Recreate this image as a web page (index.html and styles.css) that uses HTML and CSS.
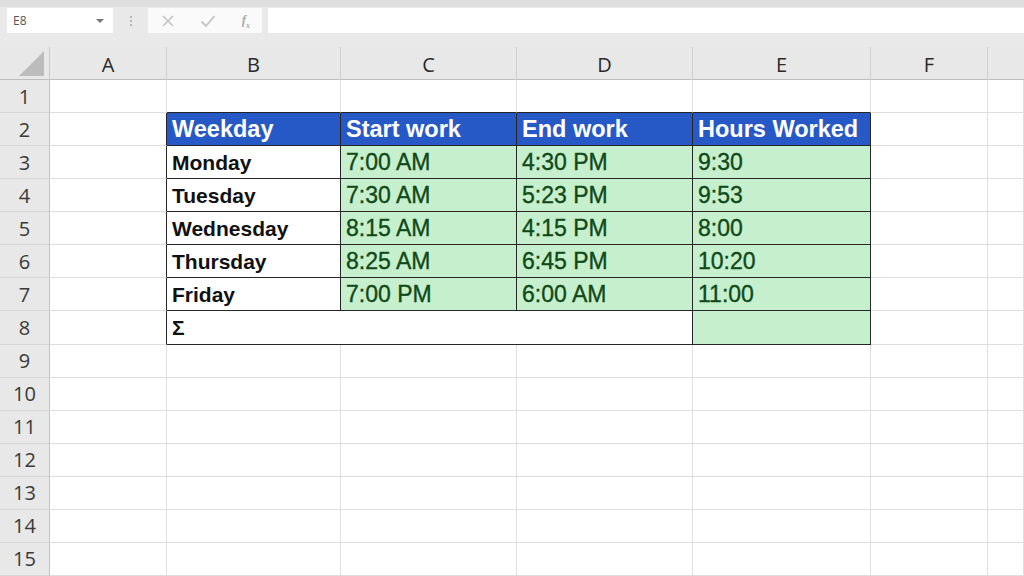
FILE: index.html
```html
<!DOCTYPE html>
<html>
<head>
<meta charset="utf-8">
<link rel="stylesheet" href="styles.css">
</head>
<body>
<div class="app">
  <div class="toolbar">
    <div class="namebox"><span>E8</span><span class="caret"></span></div>
    <div class="dots"><i></i><i></i><i></i></div>
    <div class="fxbox">
      <svg width="14" height="14" viewBox="0 0 14 14"><path d="M2 2 L12 12 M12 2 L2 12" stroke="#c4c4c4" stroke-width="1.6" fill="none"/></svg>
      <svg width="16" height="14" viewBox="0 0 16 14"><path d="M1.5 7.5 L6 12 L14.5 2" stroke="#c4c4c4" stroke-width="1.8" fill="none"/></svg>
      <span class="fx">f<sub>x</sub></span>
    </div>
    <div class="formula"></div>
  </div>
  <div class="sheet">
    <div class="corner"><span class="tri"></span></div>
    <div class="ch">A</div><div class="ch">B</div><div class="ch">C</div><div class="ch">D</div><div class="ch">E</div><div class="ch">F</div><div class="ch last"></div>

    <div class="rh">1</div><div class="c"></div><div class="c tt"></div><div class="c tt"></div><div class="c tt"></div><div class="c tt"></div><div class="c"></div><div class="c"></div>

    <div class="rh">2</div><div class="c tl"></div><div class="c t hd">Weekday</div><div class="c t hd">Start work</div><div class="c t hd">End work</div><div class="c t hd">Hours Worked</div><div class="c"></div><div class="c"></div>

    <div class="rh">3</div><div class="c tl"></div><div class="c t nm">Monday</div><div class="c t g">7:00 AM</div><div class="c t g">4:30 PM</div><div class="c t g">9:30</div><div class="c"></div><div class="c"></div>

    <div class="rh">4</div><div class="c tl"></div><div class="c t nm">Tuesday</div><div class="c t g">7:30 AM</div><div class="c t g">5:23 PM</div><div class="c t g">9:53</div><div class="c"></div><div class="c"></div>

    <div class="rh">5</div><div class="c tl"></div><div class="c t nm">Wednesday</div><div class="c t g">8:15 AM</div><div class="c t g">4:15 PM</div><div class="c t g">8:00</div><div class="c"></div><div class="c"></div>

    <div class="rh">6</div><div class="c tl"></div><div class="c t nm">Thursday</div><div class="c t g">8:25 AM</div><div class="c t g">6:45 PM</div><div class="c t g">10:20</div><div class="c"></div><div class="c"></div>

    <div class="rh">7</div><div class="c tl"></div><div class="c t nm">Friday</div><div class="c t g">7:00 PM</div><div class="c t g">6:00 AM</div><div class="c t g">11:00</div><div class="c"></div><div class="c"></div>

    <div class="rh">8</div><div class="c tl"></div><div class="c t nm span3">Σ</div><div class="c t g"></div><div class="c"></div><div class="c"></div>

    <div class="rh">9</div><div class="c"></div><div class="c"></div><div class="c"></div><div class="c"></div><div class="c"></div><div class="c"></div><div class="c"></div>
    <div class="rh">10</div><div class="c"></div><div class="c"></div><div class="c"></div><div class="c"></div><div class="c"></div><div class="c"></div><div class="c"></div>
    <div class="rh">11</div><div class="c"></div><div class="c"></div><div class="c"></div><div class="c"></div><div class="c"></div><div class="c"></div><div class="c"></div>
    <div class="rh">12</div><div class="c"></div><div class="c"></div><div class="c"></div><div class="c"></div><div class="c"></div><div class="c"></div><div class="c"></div>
    <div class="rh">13</div><div class="c"></div><div class="c"></div><div class="c"></div><div class="c"></div><div class="c"></div><div class="c"></div><div class="c"></div>
    <div class="rh">14</div><div class="c"></div><div class="c"></div><div class="c"></div><div class="c"></div><div class="c"></div><div class="c"></div><div class="c"></div>
    <div class="rh">15</div><div class="c"></div><div class="c"></div><div class="c"></div><div class="c"></div><div class="c"></div><div class="c"></div><div class="c"></div>
  </div>
</div>
</body>
</html>
```
FILE: styles.css
```css
* { box-sizing: border-box; }
html, body { margin: 0; padding: 0; }
body { width: 1024px; height: 576px; overflow: hidden; background: #fff; font-family: "Liberation Sans", Arial, sans-serif; }

.app { width: 1024px; height: 576px; display: flex; flex-direction: column; background: #e8e8e8; }

.toolbar {
  height: 47px;
  display: flex;
  align-items: flex-start;
  padding: 8px 0 0 7px;
  background: linear-gradient(#dedede 0, #dedede 7px, #e9e9e9 7px);
  flex: none;
}
.namebox {
  width: 106px; height: 25px;
  background: #fff;
  display: flex; align-items: center; justify-content: space-between;
  padding: 0 9px 0 6px;
  font-family: "Open Sans", "Noto Sans", sans-serif;
  font-size: 12px; color: #555;
}
.caret { width: 0; height: 0; border-left: 4px solid transparent; border-right: 4px solid transparent; border-top: 4px solid #777; }
.dots { width: 35px; height: 25px; display: flex; flex-direction: column; align-items: center; justify-content: center; gap: 2px; }
.dots i { display: block; width: 2px; height: 2px; background: #b8b8b8; }
.fxbox {
  width: 114px; height: 25px; background: #fafafa;
  display: flex; align-items: center; justify-content: space-between;
  padding: 0 12px 0 13px;
}
.fx { font-family: "Liberation Serif", serif; font-style: italic; font-weight: bold; font-size: 13px; color: #aaa; }
.fx sub { font-size: 8px; }
.formula { flex: 1; height: 25px; margin-left: 6px; background: #fff; }

.sheet {
  flex: 1;
  display: grid;
  grid-template-columns: 50px 117px 174px 176px 176px 178px 117px 36px;
  grid-template-rows: 33px repeat(15, 33.07px);
  background: #fff;
}
.corner { background: #e8e8e8; border-right: 1px solid #c9c9c9; border-bottom: 1px solid #bdbdbd; position: relative; }
.tri { position: absolute; right: 5px; bottom: 3px; width: 0; height: 0; border-left: 25px solid transparent; border-bottom: 25px solid #bcbcbc; }
.ch {
  background: #e8e8e8;
  border-bottom: 1px solid #bdbdbd;
  border-right: 1px solid #cfcfcf;
  display: flex; align-items: center; justify-content: center;
  font-family: "Open Sans", "Noto Sans", sans-serif; font-size: 20px; color: #2a2a2a;
  padding-top: 2px;
}
.ch.last { border-right: none; }
.rh {
  background: #e8e8e8;
  border-right: 1px solid #c4c4c4;
  border-bottom: 1px solid #d6d6d6;
  display: flex; align-items: center; justify-content: center;
  font-family: "Open Sans", "Noto Sans", sans-serif; font-size: 20px; color: #3a3a3a;
}
.c {
  border-right: 1px solid #dedede;
  border-bottom: 1px solid #dedede;
  white-space: nowrap; overflow: hidden;
  line-height: 33px;
  padding-left: 5px;
}
.tt { border-bottom-color: #262626; }
.tl { border-right-color: #262626; }
.t { border-right-color: #262626; border-bottom-color: #262626; }
.hd { background: #2759c6; color: #fff; font-weight: bold; font-size: 23.5px; }
.nm { color: #111; font-weight: bold; font-size: 21px; }
.g { background: #c6efce; color: #0f4a18; font-size: 23px; -webkit-text-stroke: 0.35px #0f4a18; }
.span3 { grid-column: span 3; }
```
